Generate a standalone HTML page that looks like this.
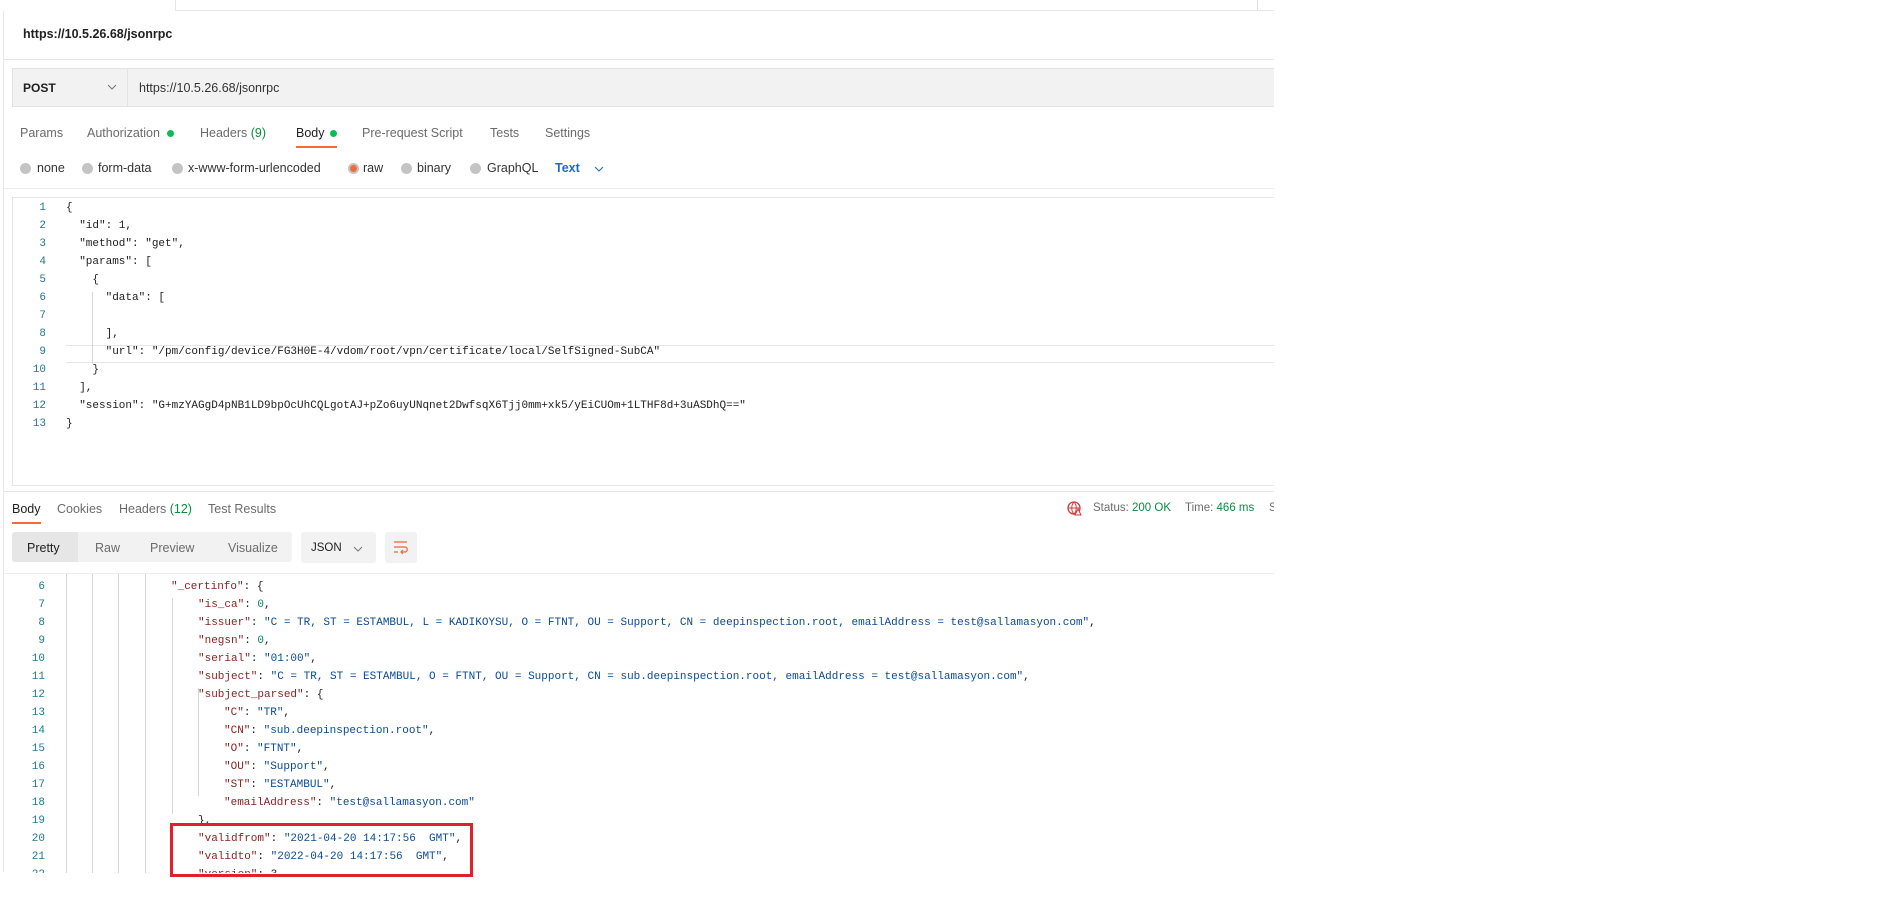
<!DOCTYPE html>
<html><head><meta charset="utf-8"><style>
*{margin:0;padding:0;box-sizing:border-box}
body{width:1886px;height:912px;background:#fff;position:relative;overflow:hidden;font-family:"Liberation Sans",sans-serif;font-size:12.5px;color:#6b6b6b}
.a{position:absolute;white-space:nowrap}
.ln{position:absolute;width:30px;text-align:right;color:#237893;font-family:"Liberation Mono",monospace;font-size:11px}
.c{position:absolute;white-space:pre;font-family:"Liberation Mono",monospace;font-size:11px;color:#212121}
.k{color:#8b1e1e}.s{color:#0b4a94}.n{color:#098658}
.rad{position:absolute;width:11px;height:11px;border-radius:50%;background:#c4c4c4}
.g{position:absolute;width:1px;background:#d6d6d6}
</style></head><body>
<div class="a" style="left:175px;top:0;width:1099px;height:11px;border-bottom:1px solid #e6e6e6;border-left:1px solid #e6e6e6"></div>
<div class="a" style="left:1257px;top:0;width:1px;height:11px;background:#e0e0e0"></div>
<div class="a" style="left:3px;top:11px;width:1px;height:861px;background:#e8e8e8"></div>
<div class="a" style="left:23px;top:27px;color:#212121;font-size:12.5px;font-weight:bold">https://10.5.26.68/jsonrpc</div>
<div class="a" style="left:4px;top:59px;width:1270px;height:1px;background:#e6e6e6"></div>
<div class="a" style="left:12px;top:68px;width:1262px;height:39px;background:#f2f2f2;border:1px solid #e3e3e3;border-right:none"></div>
<div class="a" style="left:127px;top:69px;width:1px;height:37px;background:#e3e3e3"></div>
<div class="a" style="left:23px;top:81px;color:#212121;font-weight:bold;font-size:12px">POST</div>
<svg class="a" style="left:107px;top:84px" width="10" height="7"><path d="M1 1L5 5L9 1" stroke="#777" fill="none"/></svg>
<div class="a" style="left:139px;top:81px;color:#333">https://10.5.26.68/jsonrpc</div>
<div class="a" style="left:20px;top:126px">Params</div>
<div class="a" style="left:87px;top:126px">Authorization</div>
<div class="a" style="left:167px;top:130px;width:7px;height:7px;border-radius:50%;background:#0cbb52"></div>
<div class="a" style="left:200px;top:126px">Headers <span style="color:#0a8c3e">(9)</span></div>
<div class="a" style="left:296px;top:126px;color:#212121">Body</div>
<div class="a" style="left:330px;top:130px;width:7px;height:7px;border-radius:50%;background:#0cbb52"></div>
<div class="a" style="left:296px;top:146px;width:41px;height:2px;background:#f26b3a"></div>
<div class="a" style="left:362px;top:126px">Pre-request Script</div>
<div class="a" style="left:490px;top:126px">Tests</div>
<div class="a" style="left:545px;top:126px">Settings</div>
<div class="rad" style="left:20px;top:163px"></div><div class="a" style="left:37px;top:161px;color:#333">none</div>
<div class="rad" style="left:82px;top:163px"></div><div class="a" style="left:98px;top:161px;color:#333">form-data</div>
<div class="rad" style="left:172px;top:163px"></div><div class="a" style="left:188px;top:161px;color:#333">x-www-form-urlencoded</div>
<div class="rad" style="left:348px;top:163px;background:#f26b3a;border:2px solid #c4c4c4"></div><div class="a" style="left:363px;top:161px;color:#333">raw</div>
<div class="rad" style="left:401px;top:163px"></div><div class="a" style="left:417px;top:161px;color:#333">binary</div>
<div class="rad" style="left:470px;top:163px"></div><div class="a" style="left:487px;top:161px;color:#333">GraphQL</div>
<div class="a" style="left:555px;top:161px;color:#1f6bc4;font-weight:bold">Text</div>
<svg class="a" style="left:594px;top:166px" width="10" height="7"><path d="M1 1L5 5L9 1" stroke="#1f6bc4" fill="none"/></svg>
<div class="a" style="left:4px;top:188px;width:1270px;height:1px;background:#ececec"></div>
<div class="a" style="left:12px;top:197px;width:1262px;height:289px;border:1px solid #e6e6e6;border-right:none"></div>
<div class="a" style="left:66px;top:345px;width:1208px;height:18px;border-top:1px solid #e6e6e6;border-bottom:1px solid #e6e6e6"></div>
<div class="g" style="left:92px;top:292px;height:72px"></div>
<div class="ln" style="left:16px;top:202px">1</div><div class="c" style="left:66px;top:202px">{</div>
<div class="ln" style="left:16px;top:220px">2</div><div class="c" style="left:66px;top:220px">  "id": 1,</div>
<div class="ln" style="left:16px;top:238px">3</div><div class="c" style="left:66px;top:238px">  "method": "get",</div>
<div class="ln" style="left:16px;top:256px">4</div><div class="c" style="left:66px;top:256px">  "params": [</div>
<div class="ln" style="left:16px;top:274px">5</div><div class="c" style="left:66px;top:274px">    {</div>
<div class="ln" style="left:16px;top:292px">6</div><div class="c" style="left:66px;top:292px">      "data": [</div>
<div class="ln" style="left:16px;top:310px">7</div>
<div class="ln" style="left:16px;top:328px">8</div><div class="c" style="left:66px;top:328px">      ],</div>
<div class="ln" style="left:16px;top:346px">9</div><div class="c" style="left:66px;top:346px">      "url": "/pm/config/device/FG3H0E-4/vdom/root/vpn/certificate/local/SelfSigned-SubCA"</div>
<div class="ln" style="left:16px;top:364px">10</div><div class="c" style="left:66px;top:364px">    }</div>
<div class="ln" style="left:16px;top:382px">11</div><div class="c" style="left:66px;top:382px">  ],</div>
<div class="ln" style="left:16px;top:400px">12</div><div class="c" style="left:66px;top:400px">  "session": "G+mzYAGgD4pNB1LD9bpOcUhCQLgotAJ+pZo6uyUNqnet2DwfsqX6Tjj0mm+xk5/yEiCUOm+1LTHF8d+3uASDhQ=="</div>
<div class="ln" style="left:16px;top:418px">13</div><div class="c" style="left:66px;top:418px">}</div>
<div class="a" style="left:4px;top:491px;width:1270px;height:1px;background:#e6e6e6"></div>
<div class="a" style="left:12px;top:502px;color:#212121">Body</div>
<div class="a" style="left:12px;top:522px;width:29px;height:2px;background:#f26b3a"></div>
<div class="a" style="left:57px;top:502px">Cookies</div>
<div class="a" style="left:119px;top:502px">Headers <span style="color:#0a8c3e">(12)</span></div>
<div class="a" style="left:208px;top:502px">Test Results</div>
<svg class="a" style="left:1067px;top:501px" width="15" height="15" viewBox="0 0 15 15"><circle cx="7" cy="7" r="6" stroke="#d13a3a" fill="none" stroke-width="1.3"/><path d="M1 7H13M7 1C4 4 4 10 7 13M7 1C10 4 10 10 7 13" stroke="#d13a3a" fill="none"/><path d="M8 14L11 8L14 14Z" fill="#fff" stroke="#d13a3a"/></svg>
<div class="a" style="left:1093px;top:502px;font-size:11.5px">Status: <span style="color:#0a8c3e">200 OK</span></div>
<div class="a" style="left:1185px;top:502px;font-size:11.5px">Time: <span style="color:#0a8c3e">466 ms</span></div>
<div class="a" style="left:1269px;top:502px;font-size:11.5px;width:5px;overflow:hidden">S</div>
<div class="a" style="left:12px;top:532px;width:280px;height:30px;background:#f2f2f2;border-radius:3px"></div>
<div class="a" style="left:12px;top:532px;width:66px;height:30px;background:#e6e6e6;border-radius:3px 0 0 3px"></div>
<div class="a" style="left:27px;top:541px;color:#212121">Pretty</div>
<div class="a" style="left:95px;top:541px">Raw</div>
<div class="a" style="left:150px;top:541px">Preview</div>
<div class="a" style="left:228px;top:541px">Visualize</div>
<div class="a" style="left:301px;top:532px;width:75px;height:31px;background:#f2f2f2;border-radius:3px"></div>
<div class="a" style="left:311px;top:542px;color:#212121;font-size:11.5px">JSON</div>
<svg class="a" style="left:353px;top:546px" width="10" height="7"><path d="M1 1L5 5L9 1" stroke="#777" fill="none"/></svg>
<div class="a" style="left:385px;top:532px;width:32px;height:31px;background:#f2f2f2;border-radius:3px"></div>
<svg class="a" style="left:393px;top:540px" width="16" height="15"><path d="M1 2H14M1 7H12C15 7 15 12 12 12H8M10 10L8 12L10 14M1 12H5" stroke="#e8683a" fill="none" stroke-width="1.2"/></svg>
<div class="a" style="left:4px;top:573px;width:1270px;height:300px;overflow:hidden;border-top:1px solid #ececec">
<div style="position:relative">
<div class="g" style="left:62px;top:0;height:300px"></div>
<div class="g" style="left:88px;top:0;height:300px"></div>
<div class="g" style="left:114px;top:0;height:300px"></div>
<div class="g" style="left:141px;top:0;height:300px"></div>
<div class="g" style="left:168px;top:24px;height:216px"></div>
<div class="g" style="left:194px;top:114px;height:108px"></div>
<div class="ln" style="left:11px;top:7px">6</div><div class="c" style="left:167px;top:7px"><span class="k">"_certinfo"</span>: {</div>
<div class="ln" style="left:11px;top:25px">7</div><div class="c" style="left:194px;top:25px"><span class="k">"is_ca"</span>: <span class="n">0</span>,</div>
<div class="ln" style="left:11px;top:43px">8</div><div class="c" style="left:194px;top:43px"><span class="k">"issuer"</span>: <span class="s">"C = TR, ST = ESTAMBUL, L = KADIKOYSU, O = FTNT, OU = Support, CN = deepinspection.root, emailAddress = test@sallamasyon.com"</span>,</div>
<div class="ln" style="left:11px;top:61px">9</div><div class="c" style="left:194px;top:61px"><span class="k">"negsn"</span>: <span class="n">0</span>,</div>
<div class="ln" style="left:11px;top:79px">10</div><div class="c" style="left:194px;top:79px"><span class="k">"serial"</span>: <span class="s">"01:00"</span>,</div>
<div class="ln" style="left:11px;top:97px">11</div><div class="c" style="left:194px;top:97px"><span class="k">"subject"</span>: <span class="s">"C = TR, ST = ESTAMBUL, O = FTNT, OU = Support, CN = sub.deepinspection.root, emailAddress = test@sallamasyon.com"</span>,</div>
<div class="ln" style="left:11px;top:115px">12</div><div class="c" style="left:194px;top:115px"><span class="k">"subject_parsed"</span>: {</div>
<div class="ln" style="left:11px;top:133px">13</div><div class="c" style="left:220px;top:133px"><span class="k">"C"</span>: <span class="s">"TR"</span>,</div>
<div class="ln" style="left:11px;top:151px">14</div><div class="c" style="left:220px;top:151px"><span class="k">"CN"</span>: <span class="s">"sub.deepinspection.root"</span>,</div>
<div class="ln" style="left:11px;top:169px">15</div><div class="c" style="left:220px;top:169px"><span class="k">"O"</span>: <span class="s">"FTNT"</span>,</div>
<div class="ln" style="left:11px;top:187px">16</div><div class="c" style="left:220px;top:187px"><span class="k">"OU"</span>: <span class="s">"Support"</span>,</div>
<div class="ln" style="left:11px;top:205px">17</div><div class="c" style="left:220px;top:205px"><span class="k">"ST"</span>: <span class="s">"ESTAMBUL"</span>,</div>
<div class="ln" style="left:11px;top:223px">18</div><div class="c" style="left:220px;top:223px"><span class="k">"emailAddress"</span>: <span class="s">"test@sallamasyon.com"</span></div>
<div class="ln" style="left:11px;top:241px">19</div><div class="c" style="left:194px;top:241px">},</div>
<div class="ln" style="left:11px;top:259px">20</div><div class="c" style="left:194px;top:259px"><span class="k">"validfrom"</span>: <span class="s">"2021-04-20 14:17:56  GMT"</span>,</div>
<div class="ln" style="left:11px;top:277px">21</div><div class="c" style="left:194px;top:277px"><span class="k">"validto"</span>: <span class="s">"2022-04-20 14:17:56  GMT"</span>,</div>
<div class="ln" style="left:11px;top:295px">22</div><div class="c" style="left:194px;top:295px"><span class="k">"version"</span>: 3</div>
</div></div>
<div class="a" style="left:170px;top:823px;width:303px;height:54px;border:3.5px solid #e0202a"></div>
</body></html>
